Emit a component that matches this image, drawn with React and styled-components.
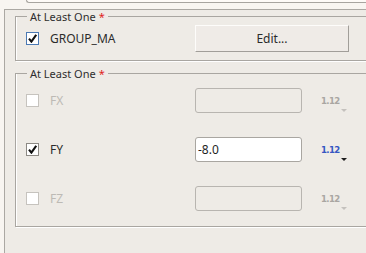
import React from "react";
import styled, { createGlobalStyle } from "styled-components";

const GlobalStyle = createGlobalStyle`
  html, body {
    margin: 0;
    padding: 0;
    background: #f8f5f1;
    overflow: hidden;
  }
  body {
    font-family: "Noto Sans", "DejaVu Sans", sans-serif;
    color: #2b2b2b;
  }
`;

const Screen = styled.div`
  width: 366px;
  height: 253px;
  overflow: hidden;
`;

const TopField = styled.div`
  margin-left: 26px;
  width: 400px;
  height: 2px;
  background: #fdfaf7;
  border-left: 1px solid #a7a49f;
  border-bottom: 1px solid #a7a49f;
  border-bottom-left-radius: 3px;
  margin-bottom: 6px;
`;

const Panel = styled.div`
  margin-left: 4px;
  width: 420px;
  height: 244px;
  box-sizing: border-box;
  padding-left: 10px;
  background: #eeebe6;
  border-top: 1px solid #aba8a3;
  border-left: 1px solid #aba8a3;
`;

const Group = styled.fieldset`
  margin: ${(p) => (p.$first ? "0" : "6px")} 0 0 0;
  padding: ${(p) => p.$pad};
  min-width: 0;
  border: 1px solid #a9a6a1;
  box-shadow: 1px 1px 0 #ffffff, inset 1px 0 0 #ffffff;
`;

/* the fieldset's own left padding already shifts the legend */
const Legend = styled.legend`
  margin-left: 1px;
  padding: 0 3px;
  font-size: 11px;
  line-height: 13px;
  color: #2e2e2e;
`;

const Star = styled.span`
  color: #e0231c;
  margin-left: 3px;
`;

const Rows = styled.div`
  display: flex;
  flex-direction: column;
  gap: 24px;
`;

const Row = styled.div`
  display: grid;
  grid-template-columns: 169px ${(p) => p.$field}px auto;
  align-items: center;
  height: ${(p) => p.$h}px;
`;

const CheckCell = styled.label`
  display: flex;
  align-items: center;
  gap: 11px;
`;

const Box = styled.span`
  width: 13px;
  height: 13px;
  box-sizing: border-box;
  display: grid;
  place-items: center;
  background: #ffffff;
  border: 1px solid ${(p) => p.$border};
`;

const Label = styled.span`
  font-size: 12px;
  line-height: 16px;
  color: ${(p) => (p.$disabled ? "#bdbab5" : "#2b2b2b")};
`;

const EditButton = styled.button`
  width: 154px;
  height: 27px;
  box-sizing: border-box;
  padding: 0;
  background: #efebe7;
  border: 1px solid;
  border-color: #fdfcfa #a19e99 #a19e99 #fdfcfa;
  font-family: "Noto Sans", "DejaVu Sans", sans-serif;
  font-size: 12px;
  color: #2b2b2b;
`;

const ValueInput = styled.input`
  width: 107px;
  height: 25px;
  box-sizing: border-box;
  margin: 0;
  padding: 0 2px;
  border: 1px solid ${(p) => (p.disabled ? "#b8b5b0" : "#a9a6a1")};
  border-radius: 3px;
  background: ${(p) => (p.disabled ? "transparent" : "#ffffff")};
  font-family: "Noto Sans", "DejaVu Sans", sans-serif;
  font-size: 12px;
  color: #1f1f1f;
  outline: none;
`;

const Precision = styled.div`
  margin-left: 19px;
  display: flex;
  align-items: flex-start;
  height: 18px;
  margin-top: 7px;
`;

const PrecisionText = styled.span`
  font-family: "DejaVu Sans", "Noto Sans", sans-serif;
  font-stretch: condensed;
  font-weight: 700;
  font-size: 9.5px;
  line-height: 12px;
  letter-spacing: -0.6px;
  color: ${(p) => (p.$active ? "#3556c2" : "#a9a6a2")};
`;

const Arrow = styled.span`
  display: block;
  width: 0;
  height: 0;
  margin-top: 14px;
  margin-left: 1px;
  border-left: 3.5px solid transparent;
  border-right: 3.5px solid transparent;
  border-top: 3px solid ${(p) => (p.$active ? "#1c1c1c" : "#c4c1bd")};
`;

const Check = () => (
  <svg width="9" height="9" viewBox="0 0 9 9">
    <path d="M1 4.6 L3.4 7.6 L8.2 0.8" fill="none" stroke="#111" strokeWidth="2.1" />
  </svg>
);

const CheckBox = ({ checked, border }) => (
  <Box $border={border}>{checked && <Check />}</Box>
);

const components = [
  { name: "FX", on: false, value: "" },
  { name: "FY", on: true, value: "-8.0" },
  { name: "FZ", on: false, value: "" },
];

const App = () => {
  return (
    <Screen>
      <GlobalStyle />
      <TopField />
      <Panel>
        <Group $first $pad="2px 0 8px 10px">
          <Legend>
            At Least One<Star>*</Star>
          </Legend>
          <Row $field={154} $h={27}>
            <CheckCell>
              <CheckBox checked border="#4b79b3" />
              <Label>GROUP_MA</Label>
            </CheckCell>
            <EditButton>Edit...</EditButton>
          </Row>
        </Group>
        <Group $pad="8px 0 15px 10px">
          <Legend>
            At Least One<Star>*</Star>
          </Legend>
          <Rows>
            {components.map((c) => (
              <Row key={c.name} $field={107} $h={25}>
                <CheckCell>
                  <CheckBox checked={c.on} border={c.on ? "#8c8984" : "#c6c3be"} />
                  <Label $disabled={!c.on}>{c.name}</Label>
                </CheckCell>
                <ValueInput disabled={!c.on} readOnly value={c.value} />
                <Precision>
                  <PrecisionText $active={c.on}>1.12</PrecisionText>
                  <Arrow $active={c.on} />
                </Precision>
              </Row>
            ))}
          </Rows>
        </Group>
      </Panel>
    </Screen>
  );
};

export default App;
